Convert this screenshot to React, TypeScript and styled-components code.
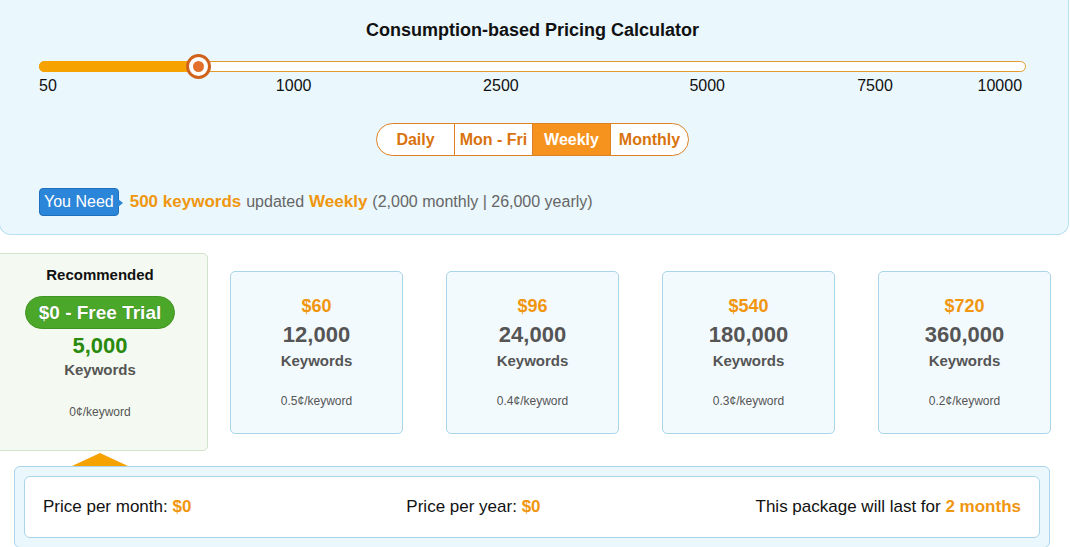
import React from 'react';
import styled, { createGlobalStyle } from 'styled-components';

const GlobalStyle = createGlobalStyle`
    body {
        margin: 0;
        background: #ffffff;
        font-family: 'Liberation Sans', Arial, sans-serif;
    }
`;

const ticks = [
    { label: '50', pos: 0, align: 'left' },
    { label: '1000', pos: 25.8, align: 'center' },
    { label: '2500', pos: 46.8, align: 'center' },
    { label: '5000', pos: 67.7, align: 'center' },
    { label: '7500', pos: 84.7, align: 'center' },
    { label: '10000', pos: 99.6, align: 'right' },
];

const periods = ['Daily', 'Mon - Fri', 'Weekly', 'Monthly'];

const plans = [
    { price: '$60', keywords: '12,000', rate: '0.5¢/keyword' },
    { price: '$96', keywords: '24,000', rate: '0.4¢/keyword' },
    { price: '$540', keywords: '180,000', rate: '0.3¢/keyword' },
    { price: '$720', keywords: '360,000', rate: '0.2¢/keyword' },
];

const App: React.FC = () => {
    const fill = 16.1;

    return (
        <>
            <GlobalStyle />
            <Page>
                <CalculatorPanel>
                    <Title>Consumption-based Pricing Calculator</Title>
                    <Slider>
                        <Track>
                            <TrackFill $width={fill} />
                            <Thumb $pos={fill}>
                                <ThumbDot />
                            </Thumb>
                        </Track>
                        <Ticks>
                            {ticks.map((tick) => (
                                <Tick key={tick.label} $pos={tick.pos} $align={tick.align}>
                                    {tick.label}
                                </Tick>
                            ))}
                        </Ticks>
                    </Slider>
                    <Segments>
                        {periods.map((period) => (
                            <Segment key={period} $active={period === 'Weekly'}>
                                {period}
                            </Segment>
                        ))}
                    </Segments>
                    <NeedRow>
                        <NeedBadge>You Need</NeedBadge>
                        <Strong>500 keywords</Strong>
                        <Muted>updated</Muted>
                        <Strong>Weekly</Strong>
                        <Muted>(2,000 monthly | 26,000 yearly)</Muted>
                    </NeedRow>
                </CalculatorPanel>

                <CardsRow>
                    <RecommendedCard>
                        <RecommendedTitle>Recommended</RecommendedTitle>
                        <TrialPill>$0 - Free Trial</TrialPill>
                        <GreenCount>5,000</GreenCount>
                        <KeywordsLabel $gap={3}>Keywords</KeywordsLabel>
                        <Rate $gap={26}>0¢/keyword</Rate>
                    </RecommendedCard>
                    {plans.map((plan) => (
                        <PlanCard key={plan.price}>
                            <Price>{plan.price}</Price>
                            <Count>{plan.keywords}</Count>
                            <KeywordsLabel $gap={4}>Keywords</KeywordsLabel>
                            <Rate $gap={24}>{plan.rate}</Rate>
                        </PlanCard>
                    ))}
                </CardsRow>

                <Pointer />
                <SummaryPanel>
                    <SummaryInner>
                        <SummaryItem>
                            Price per month: <Amount>$0</Amount>
                        </SummaryItem>
                        <SummaryItem>
                            Price per year: <Amount>$0</Amount>
                        </SummaryItem>
                        <SummaryItem>
                            This package will last for <Amount>2 months</Amount>
                        </SummaryItem>
                    </SummaryInner>
                </SummaryPanel>
            </Page>
        </>
    );
};

const Page = styled.div`
    width: 1070px;
    height: 547px;
    overflow: hidden;
`;

const CalculatorPanel = styled.div`
    box-sizing: border-box;
    width: 1070px;
    margin-left: -1px;
    height: 235px;
    padding: 20px 42px 0 39px;
    background: #eaf7fd;
    border: 1px solid #b8e0f2;
    border-top: none;
    border-radius: 0 0 12px 12px;
`;

const Title = styled.div`
    text-align: center;
    font-size: 18px;
    line-height: 21px;
    font-weight: bold;
    color: #111111;
`;

const Slider = styled.div`
    margin-top: 20px;
`;

const Track = styled.div`
    position: relative;
    box-sizing: border-box;
    height: 11px;
    background: #ffffff;
    border: 1px solid #e39a2d;
    border-radius: 6px;
`;

const TrackFill = styled.div<{ $width: number }>`
    position: absolute;
    left: -1px;
    top: -1px;
    bottom: -1px;
    width: ${(p) => p.$width}%;
    background: #f6a200;
    border-radius: 6px 0 0 6px;
`;

const Thumb = styled.div<{ $pos: number }>`
    position: absolute;
    left: ${(p) => p.$pos}%;
    top: 50%;
    box-sizing: border-box;
    width: 25px;
    height: 25px;
    margin: -12.5px 0 0 -12.5px;
    border-radius: 50%;
    border: 3px solid #d0631c;
    background: #ffffff;
    display: flex;
    align-items: center;
    justify-content: center;
`;

const ThumbDot = styled.div`
    width: 11px;
    height: 11px;
    border-radius: 50%;
    background: #e2702a;
`;

const Ticks = styled.div`
    position: relative;
    height: 18px;
    margin-top: 5px;
`;

const Tick = styled.span<{ $pos: number; $align: string }>`
    position: absolute;
    top: 0;
    left: ${(p) => p.$pos}%;
    transform: translateX(
        ${(p) => (p.$align === 'left' ? '0' : p.$align === 'right' ? '-100%' : '-50%')}
    );
    font-size: 16px;
    line-height: 18px;
    color: #111111;
`;

const Segments = styled.div`
    display: flex;
    justify-content: center;
    margin-top: 28px;
`;

const Segment = styled.div<{ $active: boolean }>`
    box-sizing: border-box;
    width: 79px;
    height: 33px;
    display: flex;
    align-items: center;
    justify-content: center;
    font-size: 16px;
    font-weight: bold;
    color: ${(p) => (p.$active ? '#ffffff' : '#d9730d')};
    background: ${(p) => (p.$active ? '#f6921e' : '#ffffff')};
    border: 1px solid #dd8126;
    &:not(:first-child) {
        margin-left: -1px;
    }
    &:first-child {
        border-radius: 17px 0 0 17px;
    }
    &:last-child {
        border-radius: 0 17px 17px 0;
    }
`;

const NeedRow = styled.div`
    display: flex;
    align-items: center;
    gap: 5px;
    margin-top: 32px;
    font-size: 16px;
`;

const NeedBadge = styled.span`
    position: relative;
    box-sizing: border-box;
    height: 28px;
    padding: 0 4px;
    margin-right: 6px;
    display: flex;
    align-items: center;
    background: #2b85d8;
    border: 1px solid #1f6fbf;
    border-radius: 4px;
    color: #ffffff;
    font-size: 16px;
    &:after {
        content: '';
        position: absolute;
        right: -5px;
        top: 10px;
        border-top: 4px solid transparent;
        border-bottom: 4px solid transparent;
        border-left: 5px solid #2b85d8;
    }
`;

const Strong = styled.span`
    font-size: 17px;
    font-weight: bold;
    color: #f0960f;
`;

const Muted = styled.span`
    color: #666666;
`;

const CardsRow = styled.div`
    display: flex;
    align-items: center;
    margin-top: 18px;
`;

const RecommendedCard = styled.div`
    box-sizing: border-box;
    width: 216px;
    height: 198px;
    margin: 0 22px 0 -8px;
    padding-top: 12px;
    display: flex;
    flex-direction: column;
    align-items: center;
    background: #f4faf1;
    border: 1px solid #cfe3cb;
    border-radius: 5px;
`;

const RecommendedTitle = styled.div`
    font-size: 15px;
    line-height: 18px;
    font-weight: bold;
    color: #111111;
`;

const TrialPill = styled.div`
    box-sizing: border-box;
    margin-top: 12px;
    height: 33px;
    width: 150px;
    display: flex;
    align-items: center;
    justify-content: center;
    background: #4aa72a;
    border: 1px solid #3f9423;
    border-radius: 17px;
    color: #ffffff;
    font-size: 19px;
    font-weight: bold;
    text-shadow: 0 0 1px rgba(0, 0, 0, 0.3);
`;

const GreenCount = styled.div`
    margin-top: 5px;
    font-size: 22px;
    line-height: 24px;
    font-weight: bold;
    color: #2a8a0e;
`;

const PlanCard = styled.div`
    box-sizing: border-box;
    width: 173px;
    height: 163px;
    padding-top: 23px;
    display: flex;
    flex-direction: column;
    align-items: center;
    background: #f3fafe;
    border: 1px solid #a8d5ec;
    border-radius: 5px;
    & + & {
        margin-left: 43px;
    }
`;

const Price = styled.div`
    font-size: 18px;
    line-height: 22px;
    font-weight: bold;
    color: #f0960f;
`;

const Count = styled.div`
    margin-top: 5px;
    font-size: 22px;
    line-height: 26px;
    font-weight: bold;
    color: #555555;
`;

const KeywordsLabel = styled.div<{ $gap: number }>`
    margin-top: ${(p) => p.$gap}px;
    font-size: 15px;
    line-height: 18px;
    font-weight: bold;
    color: #555555;
`;

const Rate = styled.div<{ $gap: number }>`
    margin-top: ${(p) => p.$gap}px;
    font-size: 12px;
    line-height: 14px;
    color: #555555;
`;

const Pointer = styled.div`
    width: 0;
    height: 0;
    margin: 2px 0 0 72px;
    border-left: 28px solid transparent;
    border-right: 28px solid transparent;
    border-bottom: 13px solid #f6a200;
`;

const SummaryPanel = styled.div`
    box-sizing: border-box;
    width: 1036px;
    margin-left: 14px;
    padding: 9px;
    background: #eaf7fd;
    border: 1px solid #a8d5ec;
    border-radius: 6px;
`;

const SummaryInner = styled.div`
    box-sizing: border-box;
    height: 62px;
    padding: 0 18px;
    display: flex;
    align-items: center;
    justify-content: space-between;
    background: #ffffff;
    border: 1px solid #a8d5ec;
    border-radius: 6px;
`;

const SummaryItem = styled.div`
    font-size: 17px;
    color: #111111;
`;

const Amount = styled.span`
    font-weight: bold;
    color: #f0960f;
`;

export default App;
